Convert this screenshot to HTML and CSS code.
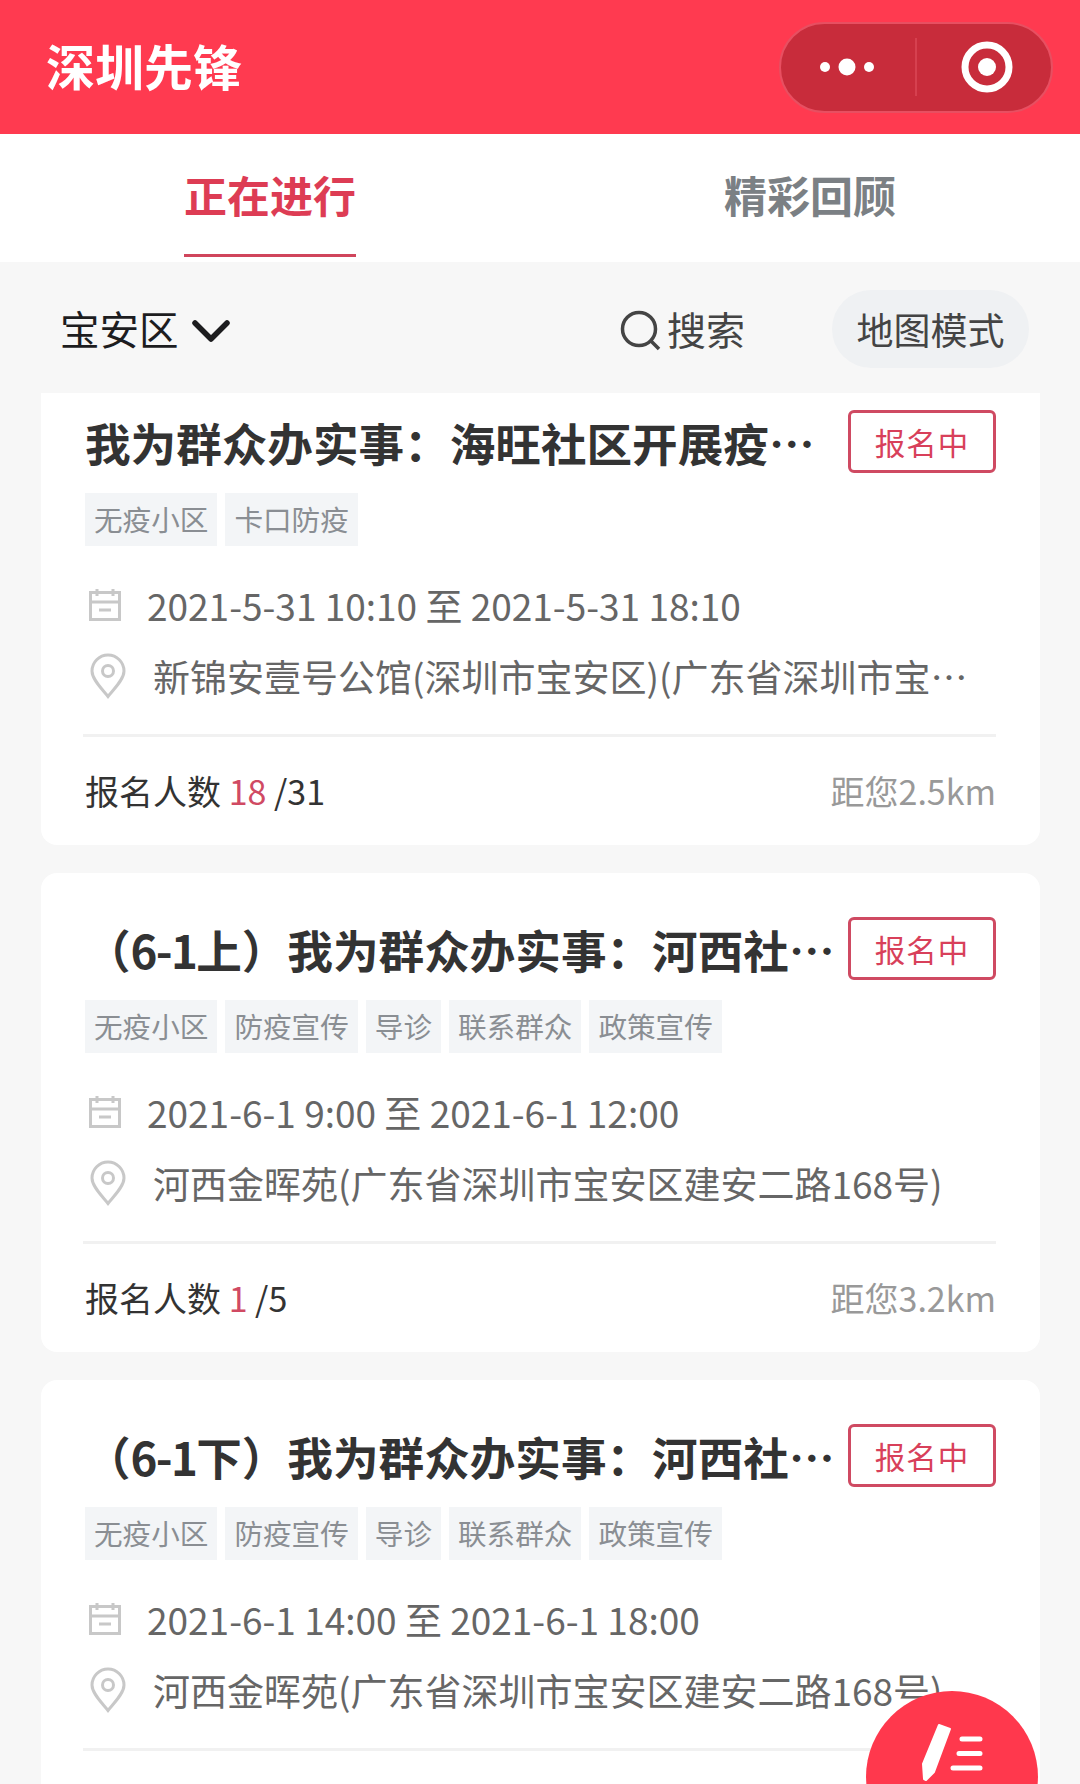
FILE: index.html
```html
<!DOCTYPE html>
<html lang="zh-CN">
<head>
    <meta charset="UTF-8">
    <meta name="viewport" content="width=device-width, initial-scale=1.0">
    <title>深圳先锋</title>
    <link rel="stylesheet" href="styles.css">
</head>
<body>
    <svg class="sprite" aria-hidden="true">
        <symbol id="icon-calendar" viewBox="0 0 34 34">
            <path d="M2.5 4.5h29v27h-29zM2.5 14h29M9 1v7M25 1v7M11 22h12"/>
        </symbol>
        <symbol id="icon-pin" viewBox="0 0 38 46">
            <path d="M19 43.500C13 36 3 26.500 3 18a16 16 0 0 1 32 0c0 8.500-10 18-16 25.500z"/>
            <circle cx="19" cy="18" r="5.500"/>
        </symbol>
    </svg>

    <header class="navbar">
        <h1>深圳先锋</h1>
        <div class="capsule">
            <svg class="capsule-dots" viewBox="0 0 56 20">
                <circle cx="6" cy="10" r="5"/>
                <circle cx="28" cy="10" r="8.500"/>
                <circle cx="50" cy="10" r="5"/>
            </svg>
            <span class="capsule-line"></span>
            <svg class="capsule-close" viewBox="0 0 52 52">
                <circle class="ring" cx="26" cy="26" r="22"/>
                <circle cx="26" cy="26" r="9"/>
            </svg>
        </div>
    </header>

    <nav class="tabs">
        <a class="tab active"><span>正在进行</span></a>
        <a class="tab"><span>精彩回顾</span></a>
    </nav>

    <div class="filters">
        <div class="district">
            宝安区
            <svg class="chevron" viewBox="0 0 40 26"><path d="M4 4l16 16L36 4"/></svg>
        </div>
        <div class="search">
            <svg class="search-icon" viewBox="0 0 42 42"><circle cx="19" cy="19" r="16.500"/><path d="M30 30l9 9"/></svg>
            搜索
        </div>
        <button class="map-btn">地图模式</button>
    </div>

    <main class="list">
        <article class="card">
            <div class="card-head">
                <h2>我为群众办实事：海旺社区开展疫…</h2>
                <span class="badge">报名中</span>
            </div>
            <div class="tags">
                <span>无疫小区</span>
                <span>卡口防疫</span>
            </div>
            <div class="info">
                <svg class="calendar"><use href="#icon-calendar"/></svg>
                <span>2021-5-31 10:10 至 2021-5-31 18:10</span>
            </div>
            <div class="info address">
                <svg class="pin"><use href="#icon-pin"/></svg>
                <span>新锦安壹号公馆(深圳市宝安区)(广东省深圳市宝…</span>
            </div>
            <div class="card-foot">
                <span>报名人数 <em>18</em> /31</span>
                <span class="distance">距您2.5km</span>
            </div>
        </article>

        <article class="card">
            <div class="card-head">
                <h2>（<span class="num">6-1</span>上）我为群众办实事：河西社…</h2>
                <span class="badge">报名中</span>
            </div>
            <div class="tags">
                <span>无疫小区</span>
                <span>防疫宣传</span>
                <span>导诊</span>
                <span>联系群众</span>
                <span>政策宣传</span>
            </div>
            <div class="info">
                <svg class="calendar"><use href="#icon-calendar"/></svg>
                <span>2021-6-1 9:00 至 2021-6-1 12:00</span>
            </div>
            <div class="info address">
                <svg class="pin"><use href="#icon-pin"/></svg>
                <span>河西金晖苑(广东省深圳市宝安区建安二路168号)</span>
            </div>
            <div class="card-foot">
                <span>报名人数 <em>1</em> /5</span>
                <span class="distance">距您3.2km</span>
            </div>
        </article>

        <article class="card">
            <div class="card-head">
                <h2>（<span class="num">6-1</span>下）我为群众办实事：河西社…</h2>
                <span class="badge">报名中</span>
            </div>
            <div class="tags">
                <span>无疫小区</span>
                <span>防疫宣传</span>
                <span>导诊</span>
                <span>联系群众</span>
                <span>政策宣传</span>
            </div>
            <div class="info">
                <svg class="calendar"><use href="#icon-calendar"/></svg>
                <span>2021-6-1 14:00 至 2021-6-1 18:00</span>
            </div>
            <div class="info address">
                <svg class="pin"><use href="#icon-pin"/></svg>
                <span>河西金晖苑(广东省深圳市宝安区建安二路168号)</span>
            </div>
            <div class="card-foot"></div>
        </article>
    </main>

    <button class="fab">
        <svg viewBox="0 0 172 172">
            <path class="pen" d="M73 34l11 4-16 43-8 8-2-1-1-15z"/>
            <path class="lines" d="M96 48h18M93 62.500h21M87 77h27"/>
        </svg>
    </button>
</body>
</html>
```

FILE: styles.css
```css
* {
    box-sizing: border-box;
}

body {
    margin: 0;
    height: 1784px;
    overflow: hidden;
    background: #f7f7f7;
    color: #333;
    font-family: "Noto Sans CJK SC", sans-serif;
}

h1, h2 {
    margin: 0;
}

button {
    border: none;
    padding: 0;
    font-family: inherit;
}

svg {
    display: block;
    flex: none;
}

.sprite {
    display: none;
}

/* 顶部导航 */
.navbar {
    height: 134px;
    padding: 0 27px 0 46px;
    background: #ff3a50;
    display: flex;
    align-items: center;
    justify-content: space-between;
}

.navbar h1 {
    padding-bottom: 5px;
    color: #fff;
    font-size: 49px;
    font-weight: bold;
    line-height: 70px;
}

.capsule {
    width: 274px;
    height: 91px;
    padding: 0 38px 0 38px;
    border: 2px solid #e84f61;
    border-radius: 46px;
    background: #c82c3b;
    display: flex;
    align-items: center;
    justify-content: space-between;
}

.capsule svg {
    fill: #fff;
}

.capsule-dots {
    width: 56px;
    height: 20px;
}

.capsule-line {
    width: 2px;
    height: 58px;
    margin-right: 5px;
    background: #d6404f;
}

.capsule-close {
    width: 52px;
    height: 52px;
}

.capsule .ring {
    fill: none;
    stroke: #fff;
    stroke-width: 7;
}

/* 标签页 */
.tabs {
    height: 128px;
    background: #fff;
    display: flex;
}

.tab {
    flex: 1;
    display: flex;
    justify-content: center;
    align-items: flex-start;
    color: #7b8084;
    font-size: 43px;
    font-weight: bold;
    line-height: 121px;
}

.tab span {
    height: 123px;
}

.tab.active {
    color: #dd3c54;
}

.tab.active span {
    border-bottom: 3px solid #d0455c;
}

/* 筛选栏，盖住滚动中的第一张卡片 */
.filters {
    position: relative;
    z-index: 1;
    height: 131px;
    padding: 0 51px 0 60px;
    background: #f7f7f7;
    display: flex;
    align-items: center;
}

.district {
    display: flex;
    align-items: center;
    color: #1d1d1f;
    font-size: 39.5px;
    line-height: 60px;
    margin-right: auto;
    gap: 12px;
}

.chevron {
    width: 40px;
    height: 26px;
    margin-top: 8px;
    fill: none;
    stroke: #1d1d1f;
    stroke-width: 5.5;
    stroke-linecap: round;
    stroke-linejoin: round;
}

.search {
    display: flex;
    align-items: center;
    gap: 5px;
    margin-right: 87px;
    color: #444;
    font-size: 39px;
    line-height: 60px;
}

.search-icon {
    width: 42px;
    height: 42px;
    margin-top: 7px;
    fill: none;
    stroke: #444;
    stroke-width: 3.5;
}

.map-btn {
    width: 197px;
    height: 78px;
    margin-top: 3px;
    border-radius: 39px;
    background: #eff1f3;
    color: #444;
    font-size: 37px;
    line-height: 76px;
}

/* 活动列表 */
.list {
    margin-top: -27px;
    padding: 0 40px 0 41px;
    display: flex;
    flex-direction: column;
    gap: 28px;
}

.card {
    height: 479px;
    padding: 44px 44px 27px;
    border-radius: 16px;
    background: #fff;
}

.card-head {
    height: 63px;
    display: flex;
    align-items: center;
    justify-content: space-between;
}

.card-head h2 {
    padding-top: 1px;
    font-size: 45.6px;
    font-weight: bold;
    line-height: 56px;
    white-space: nowrap;
}

.card-head .num {
    letter-spacing: -1.7px;
}

.badge {
    flex: none;
    width: 148px;
    height: 63px;
    border: 3px solid #cf4a62;
    border-radius: 6px;
    color: #d8405a;
    font-size: 30.5px;
    letter-spacing: 1px;
    line-height: 58px;
    text-align: center;
}

.tags {
    display: flex;
    gap: 8px;
    margin-top: 20px;
}

.tags span {
    height: 53px;
    padding: 0 9px;
    background: #f3f5f7;
    color: #8a8e93;
    font-size: 28.6px;
    line-height: 51px;
}

.info {
    display: flex;
    align-items: center;
    height: 50px;
    margin-top: 34px;
    color: #666;
    font-size: 37px;
    line-height: 50px;
    white-space: nowrap;
}

.info svg {
    fill: none;
    stroke: #c8c8c8;
    stroke-width: 3;
}

.calendar {
    width: 34px;
    height: 34px;
    margin: 0 25px 0 3px;
}

.info.address {
    margin-top: 21px;
}

.pin {
    width: 38px;
    height: 46px;
    margin: 0 26px 0 4px;
}

.card-foot {
    display: flex;
    justify-content: space-between;
    margin: 33px 0 0 -2px;
    padding: 29px 0 0 2px;
    border-top: 3px solid #f1f1f1;
    font-size: 34px;
    line-height: 50px;
}

.card-foot em {
    color: #d04a63;
    font-style: normal;
}

.distance {
    color: #999;
}

/* 悬浮按钮 */
.fab {
    position: fixed;
    z-index: 2;
    right: 42px;
    bottom: -79px;
    width: 172px;
    height: 172px;
    border-radius: 50%;
    background: #ff384d;
}

.fab .pen {
    fill: #fff;
    stroke: #fff;
    stroke-width: 2;
    stroke-linejoin: round;
}

.fab .lines {
    fill: none;
    stroke: #fff;
    stroke-width: 5;
    stroke-linecap: round;
}
```
